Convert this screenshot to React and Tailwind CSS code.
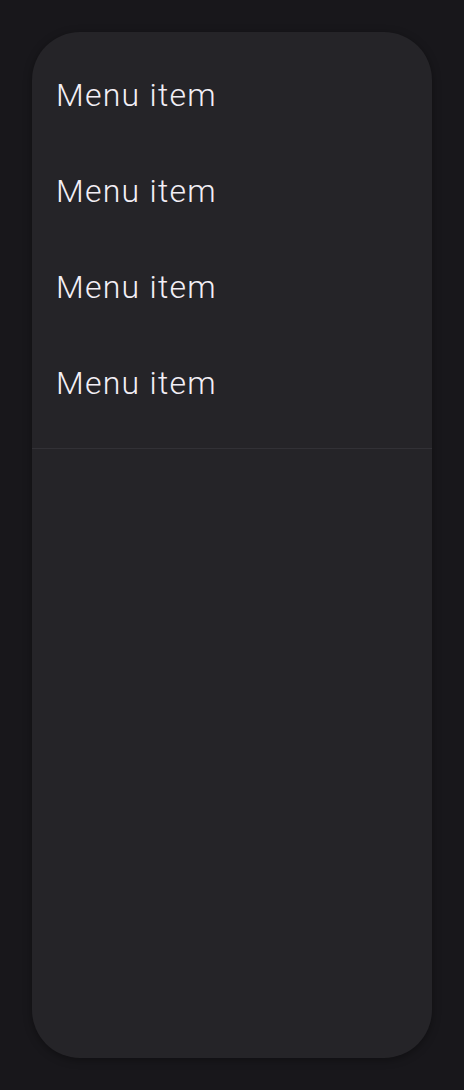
const items = ["Menu item", "Menu item", "Menu item", "Menu item"];

export default function App() {
  return (
    <div className="min-h-screen bg-[#18171b] p-8" style={{ fontFamily: "Roboto, 'Noto Sans', sans-serif" }}>
      <div className="flex h-[1026px] flex-col overflow-hidden rounded-[48px] bg-[#252428] shadow-[0_2px_8px_rgba(0,0,0,0.35)]">
        <ul className="pt-[15px] pb-[17px]">
          {items.map((label, i) => (
            <li key={i} className="flex h-[96px] items-center px-6 text-[32px] font-light tracking-[1.25px] text-[#f3eff6]">
              {label}
            </li>
          ))}
        </ul>
        <div className="h-px bg-[#323136]" />
      </div>
    </div>
  );
}
